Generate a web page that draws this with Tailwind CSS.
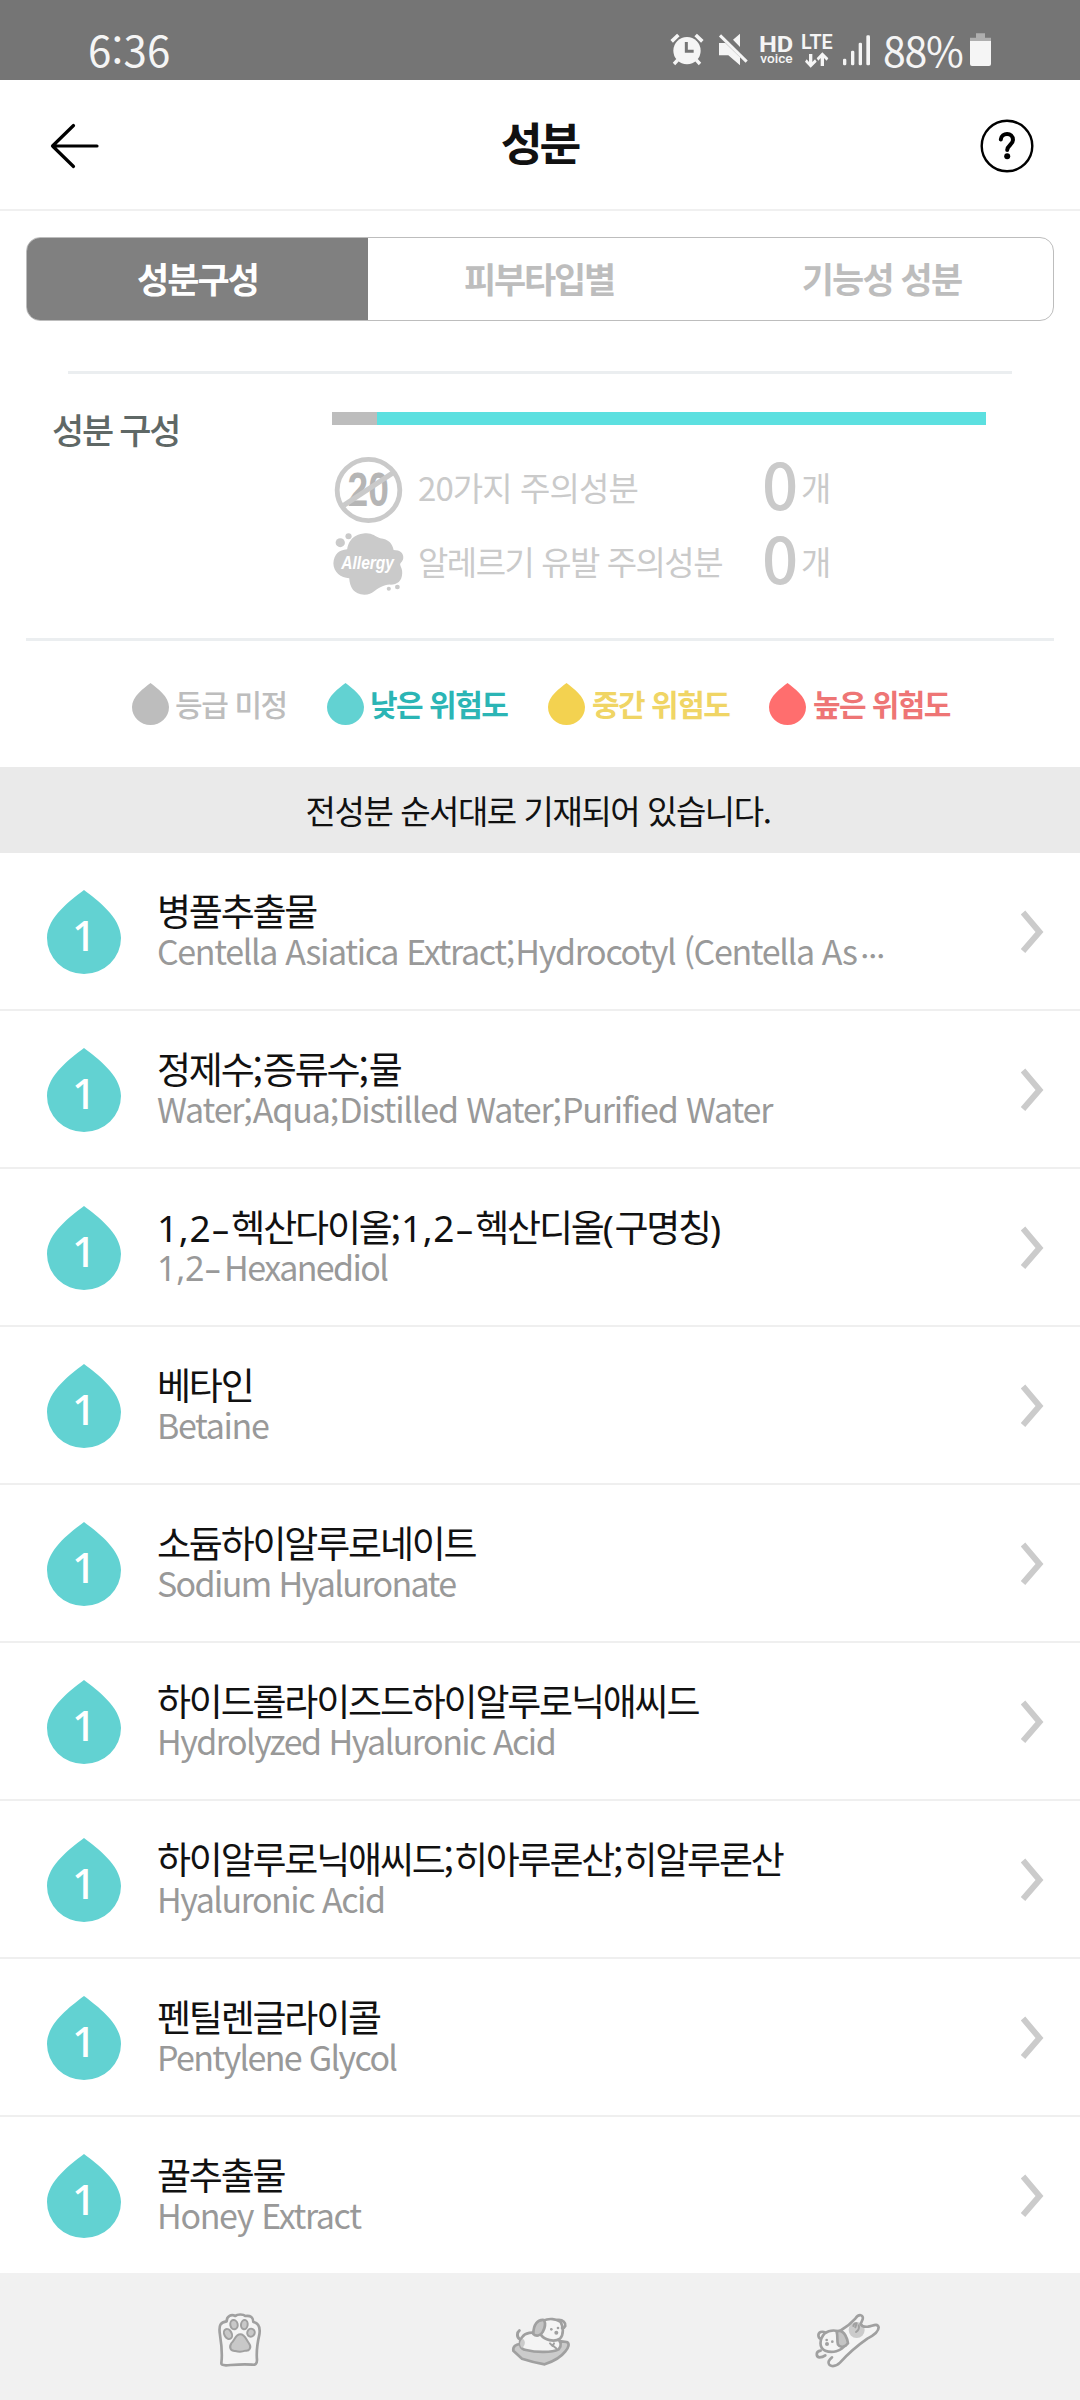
<!DOCTYPE html>
<html lang="ko">
<head>
<meta charset="utf-8">
<title>성분</title>
<script src="https://cdn.jsdelivr.net/npm/@tailwindcss/browser@4"></script>
</head>
<body class="bg-white">
<svg class="hidden">
  <symbol id="drop" viewBox="0 0 74 84"><path d="M37 0C50 10 74 27 74 48A37 36 0 0 1 0 48C0 27 24 10 37 0Z" fill="currentColor"/></symbol>
</svg>
<div class="flex h-[2400px] w-[1080px] flex-col overflow-hidden bg-white font-['Noto_Sans_CJK_KR',sans-serif] text-[#111]">

  <!-- status bar -->
  <div class="flex h-20 shrink-0 items-center bg-[#757575] text-[#f5f5f5]">
    <div class="w-[665px] pl-[88px] pt-[17px] text-[42px] leading-[60px] tracking-[0.200px]">6:36</div>
    <svg class="h-20 w-[45px]" viewBox="75 0 135 240" fill="none" stroke="currentColor">
      <circle cx="141" cy="152" r="41" fill="currentColor" stroke="none"/>
      <path d="M95 124L115 105M187 124L167 105" stroke-width="11"/>
      <path d="M113 180L102 192M169 180L180 192" stroke-width="10"/>
      <path d="M139 126V154H161" stroke="#757575" stroke-width="9"/>
    </svg>
    <svg class="h-20 w-[45px]" viewBox="210 0 135 240" fill="currentColor">
      <path d="M300 101V141L279 119ZM237 129H256L300 172V196L265 166H237Z"/>
      <path d="M240 106L320 185" fill="none" stroke="currentColor" stroke-width="9"/>
    </svg>
    <svg class="h-20 w-[43px]" viewBox="345 0 129 240" fill="currentColor" font-family="Roboto, sans-serif">
      <text x="357" y="155" font-size="66" font-weight="700" textLength="103" lengthAdjust="spacingAndGlyphs">HD</text>
      <text x="361" y="188" font-size="39" font-weight="500" textLength="97" lengthAdjust="spacingAndGlyphs">voice</text>
    </svg>
    <svg class="h-20 w-[41px]" viewBox="474 0 123 240" fill="currentColor" font-family="Roboto, sans-serif">
      <text x="483" y="146" font-size="58" font-weight="600" textLength="95" lengthAdjust="spacingAndGlyphs">LTE</text>
      <path d="M507 162H517V186L525 178L530 185L512 203L495 185L500 178L507 186ZM542 198H552V174L560 182L565 175L547 157L530 175L535 182L542 174Z"/>
    </svg>
    <svg class="h-20 w-[38px]" viewBox="597 0 114 240" fill="currentColor">
      <rect x="609" y="176" width="10" height="20" rx="4"/><rect x="633" y="152" width="10" height="44" rx="4"/><rect x="656" y="128" width="10" height="68" rx="4"/><rect x="679" y="106" width="11" height="90" rx="4"/>
    </svg>
    <div class="w-[88px] pl-[6px] pt-[17px] text-[41px] leading-[60px] tracking-[-1.200px]">88%</div>
    <svg class="h-20 w-[30px]" viewBox="975 0 90 240" fill="currentColor">
      <path d="M1008 100H1035V113H1053V123H990V113H1008Z" opacity=".45"/><path d="M990 123H1053V192Q1053 198 1047 198H996Q990 198 990 192Z"/>
    </svg>
  </div>

  <!-- header -->
  <header class="flex h-[131px] shrink-0 items-center justify-between border-b-2 border-[#f0f0f0] pr-[46px] pl-[50px]">
    <svg class="mt-[2px] h-[46px] w-[53px]" viewBox="0 0 53 46" fill="none" stroke="#000" stroke-width="3.2" stroke-linecap="round" stroke-linejoin="round"><path d="M23.500 2.500L2.500 23L23.500 43.500M2.500 23H47"/></svg>
    <h1 class="mr-[4px] pb-[7px] text-[45.500px] leading-[60px] font-bold tracking-[-3px]">성분</h1>
    <svg class="mt-[2px] h-[54px] w-[54px]" viewBox="0 0 54 54" fill="none" stroke="#000"><circle cx="27" cy="27" r="25.300" stroke-width="2.400"/><path d="M20.800 20.500C21.500 13 33 13 33 21C33 25.500 27.200 26.500 27.200 31" stroke-width="4" stroke-linecap="round"/><circle cx="27.200" cy="37.300" r="3" fill="#000" stroke="none"/></svg>
  </header>

  <!-- tabs -->
  <div class="mx-[26px] mt-[26px] flex h-[84px] shrink-0 overflow-hidden rounded-[14px] border border-[#bdbdbd] bg-clip-border text-[35px] leading-[50px] font-bold text-[#bdbdbd]">
    <div class="w-[341px] shrink-0 bg-[#808080] pt-[15px] text-center tracking-[-2px] text-white">성분구성</div>
    <div class="w-[342px] pt-[15px] text-center tracking-[-2.200px]">피부타입별</div>
    <div class="w-[343px] pt-[15px] text-center tracking-[-1.900px]">기능성 성분</div>
  </div>

  <!-- composition -->
  <div class="mx-[68px] mt-[50px] h-[3px] shrink-0 bg-[#ebeef0]"></div>
  <section class="flex h-[264px] shrink-0 pl-[52px]">
    <h2 class="w-[280px] pt-[30px] text-[35px] leading-[50px] font-medium tracking-[-2.300px] text-[#5f6866]">성분 구성</h2>
    <div class="w-[654px] pt-[38px]">
      <div class="flex h-[13px]"><div class="w-[45px] bg-[#bdbdbd]"></div><div class="flex-1 bg-[#5ce0e0]"></div></div>
      <div class="mt-[28px] flex h-[74px] items-center text-[33px] leading-[44px] text-[#cacaca]">
        <svg class="h-[74px] w-[74px]" viewBox="64 189 215 222" preserveAspectRatio="none">
          <text x="109" y="349" font-family="Liberation Sans, sans-serif" font-size="144" font-weight="700" textLength="120" lengthAdjust="spacingAndGlyphs" fill="#b5b5b5">20</text>
          <path d="M98 346L242 248" stroke="#cacaca" stroke-width="15"/>
          <ellipse cx="170" cy="300" rx="91" ry="92" fill="none" stroke="#cacaca" stroke-width="14"/>
        </svg>
        <span class="ml-[12px] w-[344px] pb-[7px] tracking-[-0.900px]">20가지 주의성분</span>
        <span class="w-[39px] pb-[16px] text-[63.500px] leading-[58px] font-medium">0</span>
        <span class="pb-[7px]">개</span>
      </div>
      <div class="flex h-[74px] items-center text-[33px] leading-[44px] text-[#cacaca]">
        <svg class="h-[74px] w-[74px]" viewBox="64 411 215 222" preserveAspectRatio="none" fill="#cacaca">
          <path d="M108 478C114 440 142 430 164 430C182 430 190 440 204 445C228 447 240 462 243 480C262 480 273 490 271 505C270 515 262 518 262 524C264 532 269 538 268 550C267 574 254 584 234 584C224 583 216 588 206 591C190 597 184 614 158 614C128 613 116 594 114 565C90 564 68 546 68 520C70 492 84 480 108 478Z"/>
          <circle cx="88" cy="458" r="13.500"/><circle cx="112" cy="439" r="9"/><circle cx="229" cy="596" r="6"/><circle cx="254" cy="591" r="7"/>
          <text x="91" y="537" font-family="Liberation Sans, sans-serif" font-size="54" font-weight="700" font-style="italic" textLength="153" lengthAdjust="spacingAndGlyphs" fill="#fff">Allergy</text>
        </svg>
        <span class="ml-[12px] w-[344px] pb-[7px] tracking-[-1.500px]">알레르기 유발 주의성분</span>
        <span class="w-[39px] pb-[16px] text-[63.500px] leading-[58px] font-medium">0</span>
        <span class="pb-[7px]">개</span>
      </div>
    </div>
  </section>
  <div class="mx-[26px] h-[3px] shrink-0 bg-[#ebeef0]"></div>

  <!-- legend -->
  <div class="flex h-[126px] shrink-0 items-center pl-[132px] text-[30px] leading-[40px] font-medium">
    <div class="flex w-[195px] items-center text-[#bdbdbd]"><svg class="h-[42px] w-[37px]"><use href="#drop"/></svg><span class="pb-[3px] pl-[6px] tracking-[-1.400px]">등급 미정</span></div>
    <div class="flex w-[221px] items-center text-[#62d2d2]"><svg class="h-[42px] w-[37px]"><use href="#drop"/></svg><span class="pb-[3px] pl-[6px] font-bold tracking-[-1.500px] text-[#2bb5b5]">낮은 위험도</span></div>
    <div class="flex w-[221px] items-center text-[#f3d250]"><svg class="h-[42px] w-[37px]"><use href="#drop"/></svg><span class="pb-[3px] pl-[7px] font-bold tracking-[-1.500px] text-[#f0d565]">중간 위험도</span></div>
    <div class="flex items-center text-[#ff6e6e]"><svg class="h-[42px] w-[37px]"><use href="#drop"/></svg><span class="pb-[3px] pl-[7px] font-bold tracking-[-1.600px] text-[#ee7575]">높은 위험도</span></div>
  </div>
  <div class="h-[86px] shrink-0 bg-[#eaeaea] pt-[18px] pr-[4px] text-center text-[33px] leading-[50px] tracking-[-1.450px]">전성분 순서대로 기재되어 있습니다.</div>

  <!-- ingredients -->
  <ul id="list" class="h-[1420px] shrink-0 overflow-hidden"></ul>

  <!-- bottom navigation -->
  <nav class="flex h-[127px] shrink-0 bg-[#f1f1f1] pt-[7px] pl-[200px]">
    <svg class="h-[110px] w-[80px]" viewBox="0 0 240 330" fill="none" stroke="#a0a0a0" stroke-width="8" stroke-linejoin="round">
      <path d="M64 250C68 220 64 190 60 165C55 135 62 126 80 124C80 108 94 102 106 108C112 102 130 102 136 108C152 106 160 112 160 126C178 130 181 146 178 164C172 190 169 220 171 240C171 252 166 255 156 254C130 251 106 254 78 256C68 256 64 254 64 250Z" fill="#f4f4f4"/>
      <g fill="#c8c8c8" stroke-width="6"><ellipse cx="102" cy="134" rx="11" ry="14" transform="rotate(-12 102 134)"/><ellipse cx="133" cy="134" rx="10" ry="14" transform="rotate(8 133 134)"/><ellipse cx="84" cy="162" rx="11" ry="16" transform="rotate(-28 84 162)"/><ellipse cx="153" cy="158" rx="11" ry="12" transform="rotate(25 153 158)"/>
      <path d="M121 163C136 163 138 180 147 190C156 202 148 214 136 212C126 216 116 216 106 213C92 214 86 202 94 190C104 182 106 163 121 163Z"/></g>
    </svg>
    <svg class="mt-[10px] ml-[210px] h-[90px] w-[100px]" viewBox="0 0 300 270" fill="none" stroke="#a0a0a0" stroke-width="8" stroke-linecap="round" stroke-linejoin="round">
      <path d="M92 162C78 162 68 170 70 182L96 206Q126 216 164 223C190 214 214 200 226 184C236 172 240 160 230 156L214 154Z" fill="#cbcbcb"/>
      <path d="M88 122C80 128 80 142 90 148" stroke-width="9"/>
      <path d="M96 142C106 126 130 126 140 130L200 146C214 154 216 166 206 178C186 188 140 188 108 180C88 178 86 156 96 142Z" fill="#f4f4f4"/>
      <path d="M98 146C108 152 106 166 96 174C88 166 88 154 98 146Z" fill="#cbcbcb" stroke="none"/>
      <path d="M160 92C176 84 200 86 212 96C220 110 222 134 210 146C192 158 164 150 152 134Z" fill="#f4f4f4"/>
      <path d="M162 90C142 88 130 104 130 132C138 140 152 138 158 126C166 112 166 98 162 90Z" fill="#c4c4c4"/>
      <path d="M202 90C220 88 228 100 226 108Q222 116 216 114"/>
      <circle cx="184" cy="118" r="4" fill="#a0a0a0" stroke="none"/><circle cx="204" cy="114" r="4" fill="#a0a0a0" stroke="none"/><circle cx="199" cy="128" r="6" fill="#a0a0a0" stroke="none"/>
      <path d="M180 160L188 168L192 160M190 168L200 176" stroke-width="6"/>
    </svg>
    <svg class="mt-[10px] ml-[210px] h-[90px] w-[100px]" viewBox="0 0 300 270" fill="none" stroke="#a0a0a0" stroke-width="8" stroke-linecap="round" stroke-linejoin="round">
      <path d="M124 120Q148 106 166 86C176 70 192 74 188 88L182 102Q186 112 204 110C218 108 232 98 236 112C236 126 222 136 202 146Q156 178 120 218C104 234 82 230 86 214Q90 206 96 202L90 180Z" fill="#f4f4f4" stroke="none"/>
      <circle cx="170" cy="120" r="24" fill="#cbcbcb" stroke="none"/>
      <path d="M124 120Q148 106 166 86C176 70 192 74 188 88L182 102Q186 112 204 110C218 108 232 98 236 112C236 126 222 136 202 146Q156 178 120 218C104 234 82 230 86 214Q90 206 96 202"/>
      <path d="M160 108Q162 98 170 100L166 112M176 106Q180 118 168 126" stroke-width="6"/>
      <path d="M62 146C54 144 52 130 62 126Q70 124 76 128" />
      <path d="M74 130C90 118 112 120 124 128L136 164C124 184 96 190 76 182C56 174 58 148 74 130Z" fill="#f4f4f4"/>
      <path d="M118 122C134 124 142 146 144 160C136 172 120 174 114 164C110 150 114 138 110 126Z" fill="#c4c4c4"/>
      <path d="M62 182C46 184 48 200 58 202Q68 202 76 196"/>
      <circle cx="80" cy="150" r="4" fill="#a0a0a0" stroke="none"/><circle cx="97" cy="155" r="4" fill="#a0a0a0" stroke="none"/><circle cx="81" cy="162" r="6" fill="#a0a0a0" stroke="none"/>
    </svg>
  </nav>
</div>
<script>
const latin = s => `<span class="font-['Noto_Sans'] tracking-[0.700px]">${s}</span>`;
const latinTight = s => `<span class="font-['Noto_Sans'] tracking-[-0.300px]">${s}</span>`;
const dash = `<span class="inline-block w-[20px] origin-left scale-x-[1.600] font-['Noto_Sans']">-</span>`;
const semi = '<span class="tracking-normal">;</span>';
const dots = '<span class="ml-[4px] text-[24px] leading-none font-black tracking-[-2px]">…</span>';
const items = [
  ['병풀추출물', 'Centella Asiatica Extract;Hydrocotyl (Centella As' + dots, 'tracking-[-1.350px]'],
  ['정제수;증류수;물', 'Water;Aqua;Distilled Water;Purified Water', 'tracking-[-1.180px]'],
  [latin('1,2') + dash + '헥산다이올;' + latin('1,2') + dash + '헥산디올' + latin('(') + '구명칭' + latin(')'), latinTight('1,2') + dash + 'Hexanediol', 'tracking-[-1.600px]'],
  ['베타인', 'Betaine', 'tracking-[-1.350px]'],
  ['소듐하이알루로네이트', 'Sodium Hyaluronate', 'tracking-[-1.650px]'],
  ['하이드롤라이즈드하이알루로닉애씨드', 'Hydrolyzed Hyaluronic Acid', 'tracking-[-1.550px]'],
  ['하이알루로닉애씨드;히아루론산;히알루론산', 'Hyaluronic Acid', 'tracking-[-1.500px]'],
  ['펜틸렌글라이콜', 'Pentylene Glycol', 'tracking-[-1.650px]'],
  ['꿀추출물', 'Honey Extract', 'tracking-[-1.350px]'],
].map(([name, en, spacing]) => [name.replaceAll(';', semi), en.replaceAll(';', semi), spacing]);
document.getElementById('list').innerHTML = items.map(([name, en, spacing]) => `
  <li class="flex h-[158px] border-b-2 border-[#efefef] pt-[37px] pl-[47px]">
    <svg class="h-[84px] w-[74px] text-[#62d2d2]" viewBox="0 0 74 84"><use href="#drop" width="74" height="84"/><text x="37" y="61" text-anchor="middle" font-family="Noto Sans" font-size="42" font-weight="500" fill="#fff">1</text></svg>
    <div class="ml-[36px] w-[864px] whitespace-nowrap">
      <div class="h-[41px] text-[37px] leading-[41px] tracking-[-2.200px]">${name}</div>
      <div class="h-[40px] text-[34px] leading-[40px] text-[#999] ${spacing}">${en}</div>
    </div>
    <svg class="mt-[20px] h-[44px] w-[24px]" viewBox="0 0 24 44" fill="none" stroke="#cbcbcb" stroke-width="6"><path d="M2 2.500L18.500 22L2 41"/></svg>
  </li>`).join('');
</script>
</body>
</html>
